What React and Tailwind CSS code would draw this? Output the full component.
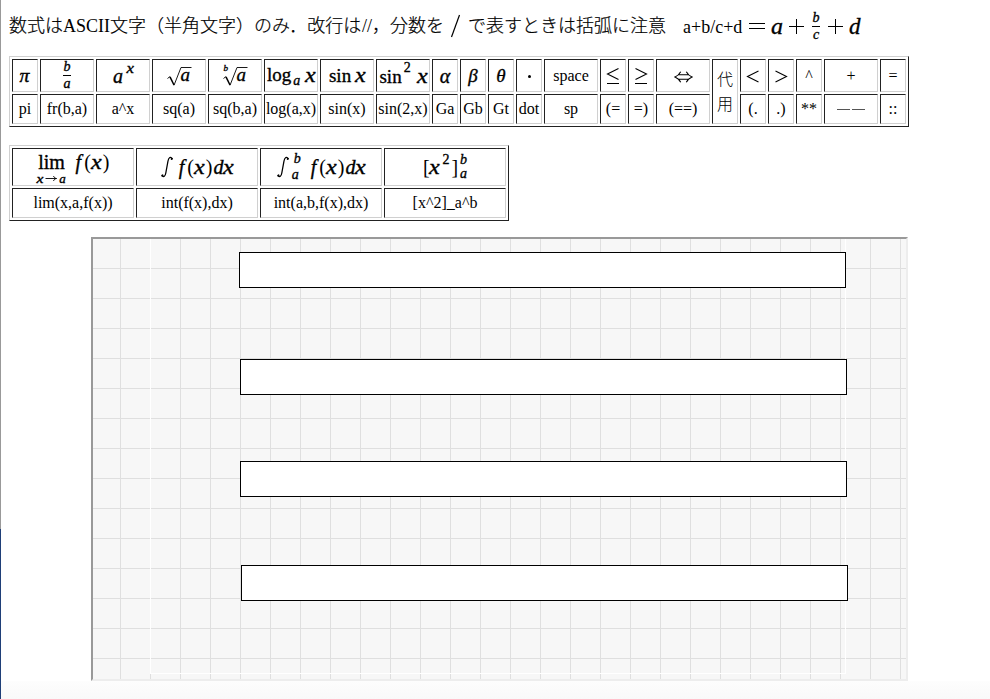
import React from 'react';

const It = ({ children, className = '' }) => (
  <i className={`inline-block italic leading-none [-webkit-text-stroke:0.35px_black] ${className}`}>{children}</i>
);

const X = ({ className = '' }) => (
  <It className={`scale-x-[1.2] text-[20px] ${className}`}>x</It>
);

const Up = ({ children, className = '' }) => (
  <span className={`inline-block leading-none [-webkit-text-stroke:0.35px_black] ${className}`}>{children}</span>
);

const Row = ({ children, className = '' }) => (
  <span className={`flex items-center justify-center whitespace-nowrap leading-none ${className}`}>{children}</span>
);

const Fraction = ({ top, bottom, className = '' }) => (
  <span className={`inline-flex w-2 flex-col items-center ${className}`}>
    <It className="text-[14px] leading-[13px]">{top}</It>
    <span className="my-px h-px w-full bg-black" />
    <It className="text-[14px] leading-[12px]">{bottom}</It>
  </span>
);

const Root = ({ index }) => (
  <span className="relative block h-[22px] w-[27px] shrink-0">
    <svg className="h-[22px] w-[27px]" viewBox="0 0 27 22" fill="none" stroke="#000">
      <path d="M1.5 13.5 L4 11.5" strokeWidth="0.9" />
      <path d="M4 11.8 L8 20" strokeWidth="1.5" />
      <path d="M8 20.3 L15 2.5 H25.5" strokeWidth="0.9" />
    </svg>
    <It className="absolute left-[15px] top-0 text-[19px]">a</It>
    {index && <It className="absolute -top-px left-[2px] text-[9px] [-webkit-text-stroke:0.15px_black]">{index}</It>}
  </span>
);

const Integral = () => (
  <svg className="h-[22px] w-3" viewBox="0 0 12 22" fill="none" stroke="#000" strokeLinecap="round">
    <path d="M11 2.7 C9.8 .3 7.7 1.2 7 5 L4.8 17 C4.2 20.5 2.6 21.5 1.2 19.8" strokeWidth="1.3" />
    <path d="M11 2.7 L10.6 3 M1.2 19.5 L1.6 19.3" strokeWidth="1.8" />
  </svg>
);

const Relation = ({ d, className = 'h-[18px] w-[14px]', box = '0 0 14 18' }) => (
  <svg className={`shrink-0 ${className}`} viewBox={box} fill="none" stroke="#000" strokeWidth="1.1">
    <path d={d} />
  </svg>
);

const FofX = () => (
  <>
    <It className="text-[20px]">f</It>
    <Up className="ml-[3px] text-[20px] [-webkit-text-stroke:0px]">(</Up>
    <X className="ml-px" />
    <Up className="ml-[2px] text-[20px] [-webkit-text-stroke:0px]">)</Up>
  </>
);

const symbols = [
  { w: 28, label: 'pi', view: <Row><It className="scale-x-110 text-[18px]">π</It></Row> },
  { w: 56, label: 'fr(b,a)', view: <Row><Fraction top="b" bottom="a" /></Row> },
  { w: 56, label: 'a^x', view: <Row><It className="text-[20px]">a</It><It className="mb-[13px] ml-[4px] scale-x-[1.2] text-[14px]">x</It></Row> },
  { w: 56, label: 'sq(a)', view: <Root /> },
  { w: 56, label: 'sq(b,a)', view: <Root index="b" /> },
  {
    w: 56, label: 'log(a,x)',
    view: <Row className="pb-[2px]"><Up className="text-[19px]">log</Up><It className="ml-[2px] mt-[12px] text-[14px]">a</It><X className="ml-[6px]" /></Row>,
  },
  { w: 56, label: 'sin(x)', view: <Row className="pb-px"><Up className="text-[19px]">sin</Up><X className="ml-[5px]" /></Row> },
  {
    w: 56, label: 'sin(2,x)',
    view: <Row className="pt-px"><Up className="text-[19px]">sin</Up><Up className="mb-[16px] ml-[2px] text-[14px]">2</Up><X className="ml-[7px]" /></Row>,
  },
  { w: 28, label: 'Ga', view: <Row><It className="text-[20px]">α</It></Row> },
  { w: 28, label: 'Gb', view: <Row><It className="text-[19px]">β</It></Row> },
  { w: 28, label: 'Gt', view: <Row><It className="text-[19px]">θ</It></Row> },
  { w: 28, label: 'dot', view: <span className="mt-[2px] block h-[3px] w-[3px] rounded-full bg-black" /> },
  { w: 56, label: 'sp', view: 'space' },
  { w: 28, label: '(=', view: <Relation d="M12.5 1.5 L1.5 7 L12.5 12.5 M1 16.5 H13" /> },
  { w: 28, label: '=)', view: <Relation d="M1.5 1.5 L12.5 7 L1.5 12.5 M1 16.5 H13" /> },
  {
    w: 56, label: '(==)',
    view: <Relation className="mt-[2px] h-3 w-[19px]" box="0 0 19 12" d="M4 3.8 H15 M4 8.2 H15 M6.7 .8 C5.5 3 3.5 5 1 6 C3.5 7 5.5 9 6.7 11.2 M12.3 .8 C13.5 3 15.5 5 18 6 C15.5 7 13.5 9 12.3 11.2" />,
  },
  { w: 28, stacked: ['代', '用'] },
  { w: 28, label: '(.', view: <Relation className="mt-px h-[14px] w-[14px]" box="0 0 14 14" d="M12.5 2 L1.5 7.5 L12.5 13" /> },
  { w: 28, label: '.)', view: <Relation className="mt-px h-[14px] w-[14px]" box="0 0 14 14" d="M1.5 2 L12.5 7.5 L1.5 13" /> },
  { w: 28, label: '**', view: '^' },
  {
    w: 56, label: <span className="flex justify-center gap-[2px]"><span className="h-px w-[13px] bg-[#555]" /><span className="h-px w-[13px] bg-[#555]" /></span>,
    view: '+',
  },
  { w: 28, label: '::', view: '=' },
];

const calculus = [
  {
    label: 'lim(x,a,f(x))',
    view: (
      <Row className="pb-[2px]">
        <span className="mt-[5px] flex w-[30px] flex-col items-center">
          <Up className="text-[20px] leading-[16px]">lim</Up>
          <span className="flex items-center gap-[2px]">
            <It className="scale-x-[1.2] text-[13px] leading-[11px]">x</It>
            <svg className="h-[7px] w-3 shrink-0" viewBox="0 0 12 7" fill="none" stroke="#000" strokeWidth=".9"><path d="M.5 3.5 H11.5 M8.5 1 C9 2.5 10 3.2 11.5 3.5 C10 3.8 9 4.5 8.5 6" /></svg>
            <It className="text-[13px] leading-[11px]">a</It>
          </span>
        </span>
        <span className="mb-[9px] ml-[9px] flex"><FofX /></span>
      </Row>
    ),
  },
  {
    label: 'int(f(x),dx)',
    view: <Row><Integral /><span className="ml-[6px] flex"><FofX /><It className="ml-[1px] text-[20px]">d</It><X className="ml-px" /></span></Row>,
  },
  {
    label: 'int(a,b,f(x),dx)',
    view: (
      <Row>
        <Integral />
        <span className="ml-px flex h-[30px] flex-col justify-between">
          <It className="ml-1 text-[14px] leading-[13px]">b</It>
          <It className="text-[14px] leading-[13px]">a</It>
        </span>
        <span className="ml-[10px] flex"><FofX /><It className="ml-[1px] text-[20px]">d</It><X className="ml-px" /></span>
      </Row>
    ),
  },
  {
    label: '[x^2]_a^b',
    view: (
      <Row>
        <Up className="text-[20px] [-webkit-text-stroke:0px]">[</Up>
        <X />
        <Up className="mb-[15px] ml-[4px] text-[14px]">2</Up>
        <Up className="ml-[2px] text-[20px] [-webkit-text-stroke:0px]">]</Up>
        <span className="ml-[2px] flex h-[28px] flex-col justify-between">
          <It className="text-[14px] leading-[13px]">b</It>
          <It className="text-[14px] leading-[13px]">a</It>
        </span>
      </Row>
    ),
  },
];

const tableStyle = 'table-fixed border-separate border-spacing-[2px] border border-b-[#222] border-l-[#d0d0d0] border-r-[#222] border-t-[#d0d0d0] text-center text-[16px] leading-none';
const cellStyle = 'border border-b-[#d0d0d0] border-l-[#222] border-r-[#d0d0d0] border-t-[#222] p-0 align-middle whitespace-nowrap';

const answers = [
  'left-[146px] top-[13px]',
  'left-[147px] top-[120px]',
  'left-[147px] top-[222px]',
  'left-[148px] top-[326px]',
];

export default function App() {
  return (
    <div className="flex h-[699px] w-[990px] overflow-hidden bg-white text-black [font-family:'Liberation_Serif','Noto_Sans_CJK_JP',serif]">
      <div className="flex w-px shrink-0 flex-col">
        <div className="h-[529px] bg-[#999]" />
        <div className="flex-1 bg-[#1f3f78]" />
      </div>

      <main className="flex min-w-0 flex-1 flex-col">
        <div className="flex h-[56px] shrink-0 items-center whitespace-nowrap pl-2 pb-[4px] text-[18px] font-light leading-none">
          <span className="flex w-[441px]">
            <span className="w-[54px] [-webkit-text-stroke:0.2px_black]">数式は</span>
            <span className="w-[47px]">ASCII</span>
            <span className="w-[252px] [-webkit-text-stroke:0.2px_black]">文字（半角文字）のみ．改行は</span>
            <span className="w-[10px]">//</span>
            <span className="[-webkit-text-stroke:0.2px_black]">，分数を</span>
          </span>
          <svg className="h-[24px] w-[11px]" viewBox="0 0 11 24" stroke="#000" strokeWidth="1.2"><path d="M1.5 23 L9.5 1" /></svg>
          <span className="ml-[7px] w-[198px] [-webkit-text-stroke:0.2px_black]">で表すときは括弧に注意</span>
          <span className="ml-[17px] w-[59px] pt-[2px] font-normal">a+b/c+d</span>
          <svg className="ml-[6px] h-[16px] w-[18px]" viewBox="0 0 18 16" stroke="#000"><path d="M1 5.5 H17 M1 10.5 H17" /></svg>
          <It className="ml-[5px] w-[12px] text-[24px] font-normal">a</It>
          <svg className="ml-[5px] h-[18px] w-[17px]" viewBox="0 0 17 18" stroke="#000"><path d="M1 9.5 H16 M8.5 2 V17" /></svg>
          <Fraction top="b" bottom="c" className="ml-[7px]" />
          <svg className="ml-[7px] h-[18px] w-[17px]" viewBox="0 0 17 18" stroke="#000"><path d="M1 9.5 H16 M8.5 2 V17" /></svg>
          <It className="ml-[5px] text-[23px] font-normal">d</It>
        </div>

        <table className={`ml-2 h-[71px] w-[900px] shrink-0 ${tableStyle}`}>
          <tbody>
            <tr className="h-[33px]">
              {symbols.map((s, i) => s.stacked ? (
                <td key={i} rowSpan={2} className={`${cellStyle} w-[26px] text-[16px] font-light leading-[25px]`}>
                  {s.stacked.map((c) => <div key={c}>{c}</div>)}
                </td>
              ) : (
                <td key={i} className={`${cellStyle} ${s.w === 28 ? 'w-[26px]' : 'w-[54px]'}`}>
                  <div className="flex h-[31px] items-center justify-center">{s.view}</div>
                </td>
              ))}
            </tr>
            <tr className="h-[30px]">
              {symbols.filter((s) => !s.stacked).map((s, i) => <td key={i} className={cellStyle}>{s.label}</td>)}
            </tr>
          </tbody>
        </table>

        <table className={`ml-2 mt-[18px] h-[76px] w-[500px] shrink-0 ${tableStyle}`}>
          <tbody>
            <tr className="h-[38px]">
              {calculus.map((c) => (
                <td key={c.label} className={`${cellStyle} w-[122px]`}>
                  <div className="flex h-[36px] items-center justify-center">{c.view}</div>
                </td>
              ))}
            </tr>
            <tr className="h-[30px]">
              {calculus.map((c) => <td key={c.label} className={cellStyle}>{c.label}</td>)}
            </tr>
          </tbody>
        </table>

        <section className="relative ml-[90px] mt-4 h-[444px] w-[817px] shrink-0 border-2 border-b-[#ededed] border-l-[#999] border-r-[#ededed] border-t-[#999] bg-[#f7f7f7] bg-[linear-gradient(to_right,#dfdfdf_1px,transparent_1px),linear-gradient(to_bottom,#dfdfdf_1px,transparent_1px)] bg-[size:30px_30px] bg-[position:27px_29px]">
          <div className="absolute left-[57px] top-0 h-[435px] w-[696px] border border-t-0 border-white" />
          {answers.map((place) => (
            <div key={place} className={`absolute h-9 w-[607px] border border-black bg-white ${place}`} />
          ))}
        </section>
        <div className="flex-1 bg-gradient-to-b from-[#fdfdfd] to-[#f9f9f9]" />
      </main>
    </div>
  );
}
